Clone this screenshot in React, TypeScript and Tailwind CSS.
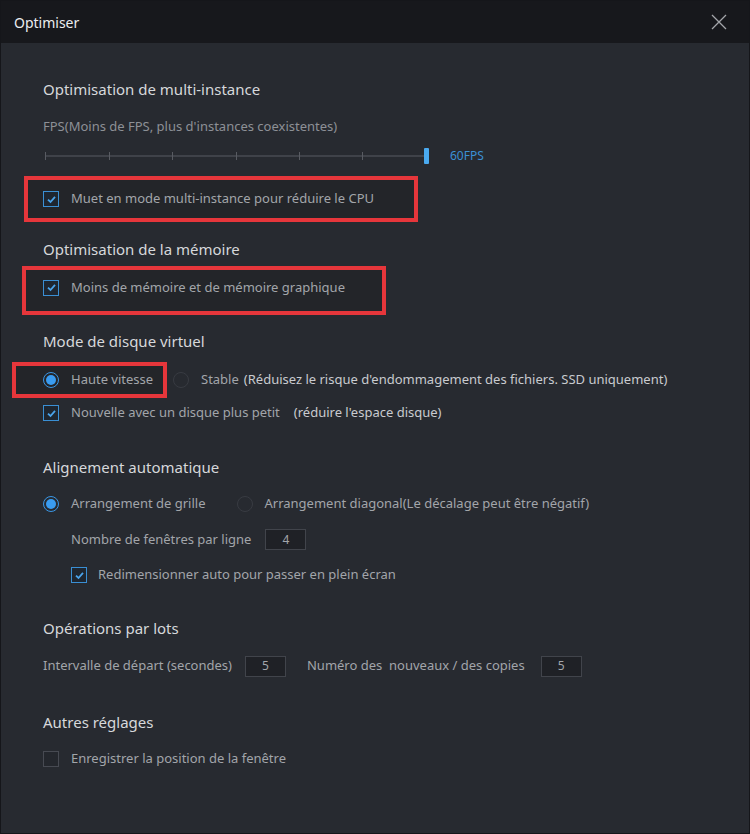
import type { ReactNode } from 'react'

const font = { fontFamily: '"Noto Sans", "Liberation Sans", sans-serif' }

function Checkbox({ checked = true }: { checked?: boolean }) {
  return (
    <span
      className={`flex h-4 w-4 shrink-0 items-center justify-center border ${
        checked ? 'border-[#3a8fd4] bg-[#1e2630]' : 'border-[#474a52] bg-[#24272d]'
      }`}
    >
      {checked && (
        <svg width="11" height="11" viewBox="0 0 11 11">
          <path d="M2 5.6 L4.5 8 L9 2.8" fill="none" stroke="#4aa3ea" strokeWidth="1.8" />
        </svg>
      )}
    </span>
  )
}

function Radio({ checked = false }: { checked?: boolean }) {
  return (
    <span
      className={`flex h-4 w-4 shrink-0 items-center justify-center rounded-full border ${
        checked ? 'border-[#3a96e4]' : 'border-[#383b42]'
      }`}
    >
      {checked && <span className="h-[10px] w-[10px] rounded-full bg-[#3a9cf0]" />}
    </span>
  )
}

function Heading({ children, className = '' }: { children: ReactNode; className?: string }) {
  return <div className={`flex h-5 items-center text-[15px] text-[#d6d8db] ${className}`}>{children}</div>
}

function NumBox({ value, className = '' }: { value: string; className?: string }) {
  return (
    <span
      className={`flex h-[21px] w-[41px] items-center justify-center border border-[#41444b] bg-[#1f2126] text-[12px] text-[#a3a6ab] ${className}`}
    >
      {value}
    </span>
  )
}

export default function App() {
  const ticks = [2, 66, 129, 193, 256, 319]

  return (
    <div className="h-[834px] w-[750px] overflow-hidden border border-[#15161a] bg-[#272a30]" style={font}>
      {/* Header */}
      <div className="flex h-[42px] items-center justify-between bg-[#17181c] pl-[13px] pr-[22px]">
        <span className="text-[14px] text-[#eceef0]">Optimiser</span>
        <svg width="16" height="16" viewBox="0 0 16 16">
          <path d="M1 1 L15 15 M15 1 L1 15" stroke="#a4a6aa" strokeWidth="1.3" />
        </svg>
      </div>

      <div className="pl-[42px] text-[13px] text-[#a2a5aa]">
        {/* Multi-instance */}
        <Heading className="mt-[36px]">Optimisation de multi-instance</Heading>
        <div className="mt-[18px] flex h-5 items-center text-[#8d9096]">
          FPS(Moins de FPS, plus d'instances coexistentes)
        </div>
        <div className="mt-[11px] flex h-4 items-center">
          <svg width="390" height="16" viewBox="0 0 390 16">
            <line x1="2" y1="8" x2="383" y2="8" stroke="#585b62" strokeWidth="1" />
            {ticks.map((t) => (
              <line key={t} x1={t + 0.5} y1="4" x2={t + 0.5} y2="12" stroke="#585b62" strokeWidth="1" />
            ))}
            <rect x="381" y="0" width="5" height="16" rx="1" fill="#4aaaf0" />
          </svg>
          <span className="ml-[17px] text-[12px] text-[#3b90d4]">60FPS</span>
        </div>
        <div className="-ml-[19px] mt-[12px] flex h-[46px] w-[394px] items-center gap-[12px] border-4 border-[#e6363b] bg-[#232529] pl-[15px]">
          <Checkbox />
          <span>Muet en mode multi-instance pour réduire le CPU</span>
        </div>

        {/* Memory */}
        <Heading className="mt-[17px]">Optimisation de la mémoire</Heading>
        <div className="-ml-[21px] mt-[7px] flex h-[49px] w-[364px] items-center gap-[12px] border-4 border-[#e6363b] bg-[#232529] pb-[6px] pl-[17px]">
          <Checkbox />
          <span>Moins de mémoire et de mémoire graphique</span>
        </div>

        {/* Virtual disk */}
        <Heading className="mt-[16px]">Mode de disque virtuel</Heading>
        <div className="mt-[11px] flex h-9 items-center">
          <div className="-ml-[31px] flex h-9 w-[155px] items-center gap-[12px] border-4 border-[#e6363b] bg-[#232529] pl-[27px]">
            <Radio checked />
            <span>Haute vitesse</span>
          </div>
          <span className="ml-[6px] mr-[12px]">
            <Radio />
          </span>
          <span>Stable</span>
          <span className="ml-[5px] text-[#c9cbcf]">(Réduisez le risque d'endommagement des fichiers. SSD uniquement)</span>
        </div>
        <div className="mt-[7px] flex h-4 items-center gap-[12px]">
          <Checkbox />
          <span>Nouvelle avec un disque plus petit</span>
          <span className="ml-[2px] text-[#c9cbcf]">(réduire l'espace disque)</span>
        </div>

        {/* Alignment */}
        <Heading className="mt-[36px]">Alignement automatique</Heading>
        <div className="mt-[19px] flex h-4 items-center">
          <Radio checked />
          <span className="ml-[12px]">Arrangement de grille</span>
          <span className="ml-[31px]">
            <Radio />
          </span>
          <span className="ml-[12px]">Arrangement diagonal(Le décalage peut être négatif)</span>
        </div>
        <div className="mt-[17px] flex h-[21px] items-center pl-[28px]">
          <span>Nombre de fenêtres par ligne</span>
          <NumBox value="4" className="ml-[14px]" />
        </div>
        <div className="mt-[17px] flex h-4 items-center gap-[11px] pl-[28px]">
          <Checkbox />
          <span>Redimensionner auto pour passer en plein écran</span>
        </div>

        {/* Batch */}
        <Heading className="mt-[35px]">Opérations par lots</Heading>
        <div className="mt-[18px] flex h-5 items-center">
          <span>Intervalle de départ (secondes)</span>
          <NumBox value="5" className="ml-[13px]" />
          <span className="ml-[21px] whitespace-pre">Numéro des  nouveaux / des copies</span>
          <NumBox value="5" className="ml-[16px]" />
        </div>

        {/* Other */}
        <Heading className="mt-[36px]">Autres réglages</Heading>
        <div className="mt-[19px] flex h-4 items-center gap-[12px]">
          <Checkbox checked={false} />
          <span>Enregistrer la position de la fenêtre</span>
        </div>
      </div>
    </div>
  )
}
